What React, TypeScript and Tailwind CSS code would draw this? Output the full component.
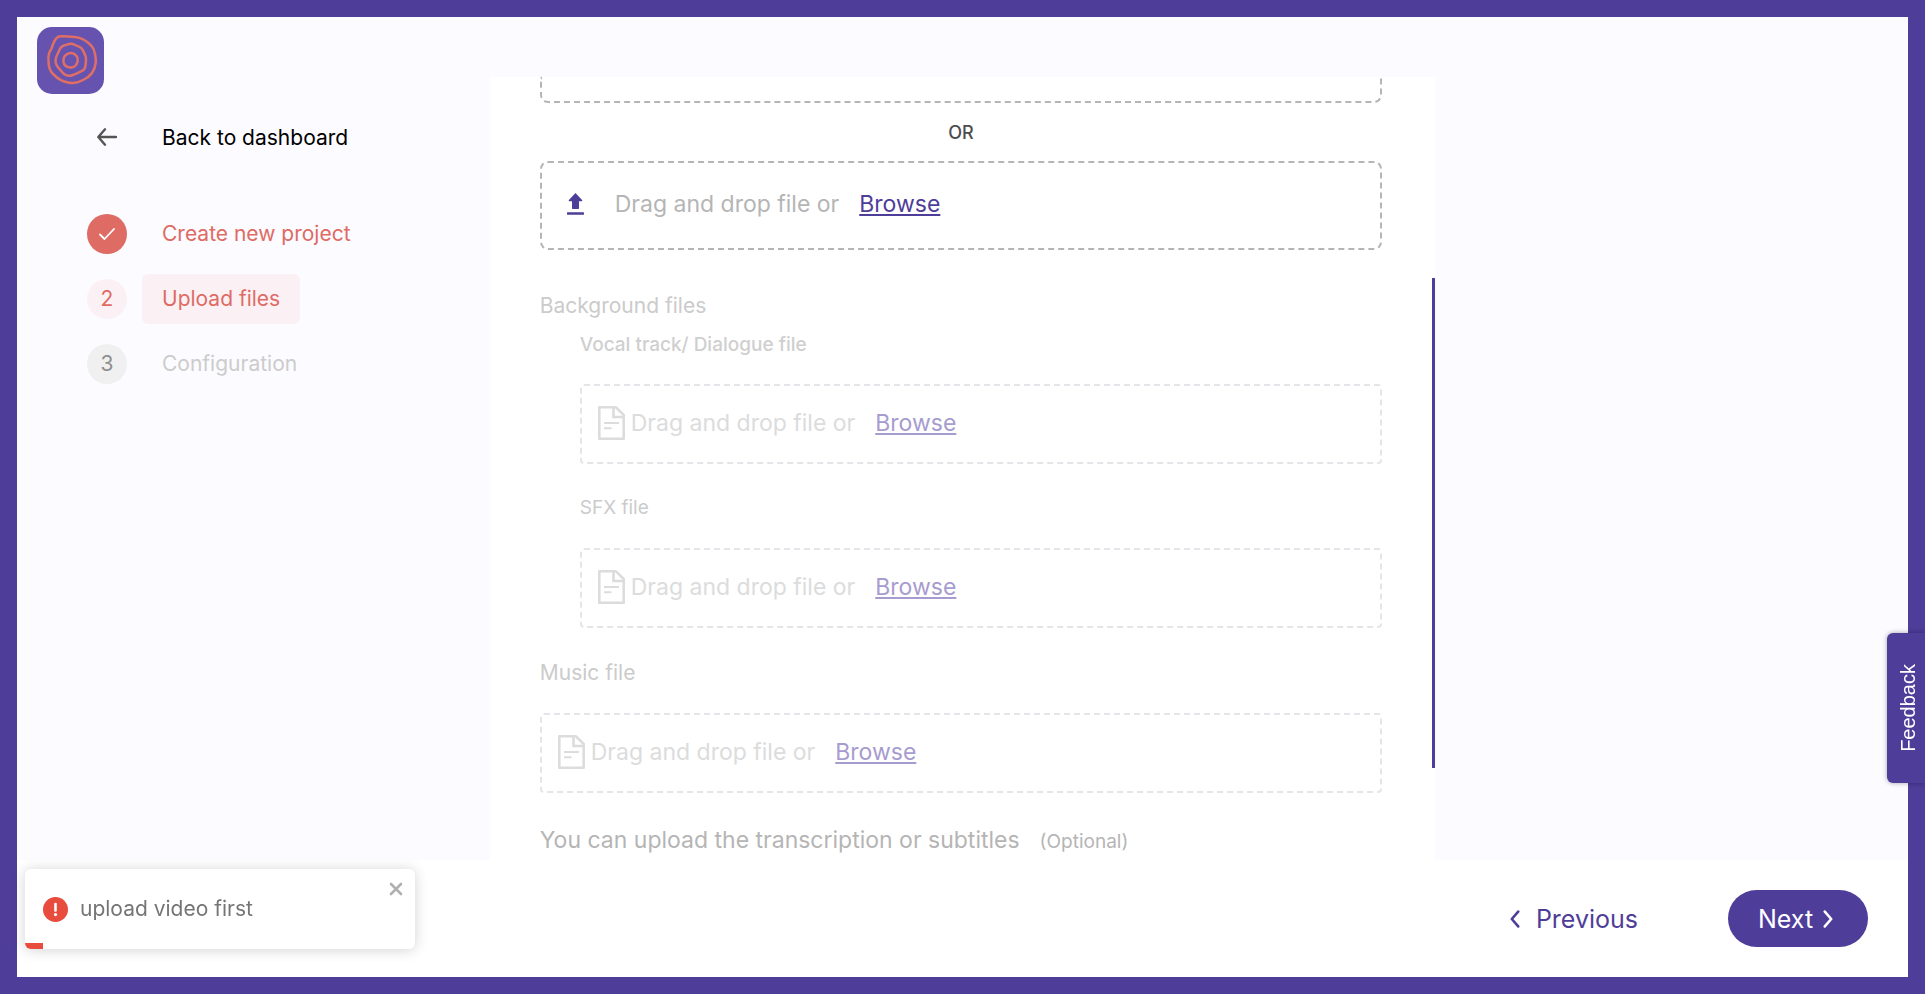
import React from "react";

function Logo() {
  return (
    <svg viewBox="0 0 67 67" className="size-[67px]" role="img" aria-label="Logo">
      <rect width="67" height="67" rx="15" fill="#6653b0" />
      <g fill="none" stroke="#df6e65" strokeWidth="2.5" strokeLinejoin="round">
        <path d="M22 9.500C26 9 32 9.500 38 10C47 11 56 18 57.500 25C58.500 29 59.500 33 58.500 37C57.500 45 53 49.500 47 52.500C41 56 37 57 31 55.500C25 54.500 20 51 16.500 47.500C12.500 44 11.500 40 11.500 34C11 29 12 25 14.500 21.500C16 17 17.500 11 22 9.500Z" />
        <path d="M27 18.500C31 17.500 34 15.500 37 17.500C40 19.500 44 19.500 45.500 22.500C47 26 49.500 29 49 33C48.500 37 49.500 40 46.500 43C43 45.500 39 46.500 36 48C32 49.500 28 48.500 25.500 45.500C23 42 18.500 39.500 18.500 34C18.500 30 20 28 21.500 25C22.500 22 24 19.500 27 18.500Z" />
        <path d="M29.500 27.500C32 25.500 36 25.500 38 27.500C40.500 29.500 41.500 33 40 36C39 39 36 41 33 40.500C29.500 40 27 38.500 26.500 35C26.500 31.500 26.500 29.500 29.500 27.500Z" />
      </g>
    </svg>
  );
}

function UploadIcon() {
  return (
    <svg viewBox="0 0 17 22" className="h-[22px] w-[17px] shrink-0" fill="#4f3d9a" aria-hidden="true">
      <path d="M8.500 0 15.300 7.300Q15.500 8.300 14.500 8.300H12V15.300Q12 16 11.300 16H5.700Q5 16 5 15.300V8.300H2.500Q1.500 8.300 1.700 7.300Z" />
      <rect y="19.200" width="17" height="2.600" rx="0.600" />
    </svg>
  );
}

function FileIcon() {
  return (
    <svg viewBox="0 0 27 34" className="h-[34px] w-[27px] shrink-0" fill="none" stroke="#dcdcdc" strokeWidth="2.600" aria-hidden="true">
      <path d="M1.300 1.300H18L25.700 9V32.700H1.300Z" strokeLinejoin="round" />
      <path d="M15.500 1.300V11H25.700" />
      <path d="M6 17H21M6 22.200H13.500" strokeWidth="2" />
    </svg>
  );
}

function Chevron({ left = false }: { left?: boolean }) {
  return (
    <svg viewBox="0 0 10 18" className="h-[18px] w-[10px]" fill="none" stroke="currentColor" strokeWidth="2.600" strokeLinecap="round" strokeLinejoin="round" aria-hidden="true">
      <path d={left ? "M8.200 1.600 1.800 9 8.200 16.400" : "M1.800 1.600 8.200 9 1.800 16.400"} />
    </svg>
  );
}

function DisabledDrop({ label }: { label: string }) {
  return (
    <div className="flex h-20 items-center rounded border-2 border-dashed border-[#e5e4e9] pb-0.5 pl-4 text-[23px] leading-8 text-[#dcdcdc]">
      <FileIcon />
      <span className="pl-1.5">Drag and drop file or</span>
      <button type="button" aria-label={`Browse ${label}`} className="ml-5 text-[#a79ccf] underline decoration-2 underline-offset-2">
        Browse
      </button>
    </div>
  );
}

const steps = [
  { n: 1, label: "Create new project", circle: "bg-[#de6b64] text-white", text: "text-[#de6b64]" },
  { n: 2, label: "Upload files", circle: "bg-[#fbf1f4] text-[#de6b64]", text: "bg-[#fbf1f4] text-[#de6b64]" },
  { n: 3, label: "Configuration", circle: "bg-[#f0f0f0] text-[#8f8f8f]", text: "text-[#cccccc]" },
];

function Sidebar() {
  return (
    <aside className="w-1/4 shrink-0 pt-11 pl-[70px] text-[21px] leading-[30px]">
      <a href="#dashboard" className="flex items-center text-black">
        <span className="flex w-10 justify-center">
          <svg viewBox="0 0 20 18" className="h-[18px] w-5" fill="none" stroke="#555" strokeWidth="2.400" strokeLinecap="round" strokeLinejoin="round" aria-hidden="true">
            <path d="M19 9H1.500M8 1.300 1.300 9 8 16.700" />
          </svg>
        </span>
        <span className="pt-0.5 pl-[35px]">Back to dashboard</span>
      </a>
      <ol className="mt-14 flex flex-col gap-[15px]">
        {steps.map((s) => (
          <li key={s.n} className="flex h-[50px] items-center gap-[15px]">
            <span className={`flex size-10 items-center justify-center rounded-full ${s.circle}`}>
              {s.n === 1 ? (
                <svg viewBox="0 0 16 12" className="h-3 w-4" fill="none" stroke="currentColor" strokeWidth="1.800" strokeLinecap="round" strokeLinejoin="round" aria-hidden="true">
                  <path d="M1 6.500 5.500 11 15 1" />
                </svg>
              ) : (
                s.n
              )}
            </span>
            <span className={`rounded-md px-5 py-2.5 ${s.text}`}>{s.label}</span>
          </li>
        ))}
      </ol>
    </aside>
  );
}

function UploadPanel() {
  return (
    <main className="relative w-1/2 overflow-hidden bg-white pr-[53px] pl-[50px]">
      <div className="h-[26px] rounded-b-lg border-2 border-t-0 border-dashed border-[#b5b5b5]" />
      <p className="pt-[17px] pb-[15px] text-center text-[18px] leading-[26px] font-medium text-[#4c4c4c]">OR</p>
      <div className="flex h-[89px] items-center rounded-lg border-2 border-dashed border-[#b5b5b5] pb-1 pl-[25px] text-[23px] leading-8 text-[#b5b5b5]">
        <UploadIcon />
        <span className="pl-[31px]">Drag and drop file or</span>
        <button type="button" className="ml-5 text-[#4f3d9a] underline decoration-2 underline-offset-2">
          Browse
        </button>
      </div>

      <h2 className="mt-10 text-[21px] leading-8 text-[#cbcbcb]">Background files</h2>
      <div className="pl-10">
        <h3 className="mt-2 mb-6 text-[19px] leading-[30px] font-medium text-[#cfcfcf]">Vocal track/ Dialogue file</h3>
        <DisabledDrop label="vocal track" />
        <h3 className="mt-[29px] mb-[25px] text-[19px] leading-[30px] text-[#cbcbcb]">SFX file</h3>
        <DisabledDrop label="SFX file" />
      </div>
      <h2 className="mt-[29px] mb-6 text-[21px] leading-8 text-[#cbcbcb]">Music file</h2>
      <DisabledDrop label="music file" />
      <p className="mt-[31px] text-[23px] leading-8 text-[#b5b5b5]">
        You can upload the transcription or subtitles
        <span className="pl-5 text-[19px]">(Optional)</span>
      </p>
      <div className="absolute top-[201px] right-0 h-[490px] w-[3px] bg-[#4f3d9a]" />
    </main>
  );
}

function Toast() {
  return (
    <div role="alert" className="fixed bottom-[45px] left-[25px] flex h-20 w-[390px] items-center overflow-hidden rounded-md bg-white pl-[18px] text-[21px] leading-[30px] text-[#757575] shadow-[0_1px_14px_rgba(0,0,0,0.18)]">
      <svg viewBox="0 0 25 25" className="size-[25px]" aria-hidden="true">
        <circle cx="12.500" cy="12.500" r="12.500" fill="#e74c3c" />
        <path d="M12.500 7V13.500" stroke="#fff" strokeWidth="2.600" strokeLinecap="round" />
        <circle cx="12.500" cy="17.600" r="1.600" fill="#fff" />
      </svg>
      <span className="pl-3">upload video first</span>
      <button type="button" aria-label="Close" className="absolute top-[13px] right-3">
        <svg viewBox="0 0 14 14" className="size-3.5" fill="none" stroke="#b0b0b0" strokeWidth="2.600" strokeLinecap="round">
          <path d="M2 2 12 12M12 2 2 12" />
        </svg>
      </button>
      <span className="absolute bottom-0 left-0 h-1.5 w-[18px] bg-[#e74c3c]" />
    </div>
  );
}

export default function App() {
  return (
    <div className="flex h-screen flex-col border-[17px] border-[#4f3d9a] bg-[#fcfbff] font-['Inter',sans-serif]">
      <header className="h-[60px] shrink-0 pt-2.5 pl-5">
        <Logo />
      </header>
      <div className="flex min-h-0 flex-1">
        <Sidebar />
        <UploadPanel />
      </div>
      <footer className="flex h-[117px] shrink-0 items-center justify-end gap-[90px] bg-white pr-10 text-[25px] leading-9">
        <button type="button" className="flex items-center gap-4 text-[#4f3d9a]">
          <Chevron left />
          Previous
        </button>
        <button type="button" className="flex h-[57px] w-[140px] items-center gap-2.5 rounded-full bg-[#4f3d9a] pl-[30px] text-white">
          Next
          <Chevron />
        </button>
      </footer>
      <Toast />
      <button type="button" className="fixed right-0 bottom-[211px] flex h-[150px] w-[38px] items-center justify-center rounded-l-md bg-[#4f3d9a] pl-1 font-['Liberation_Sans',sans-serif] text-[20px] text-white shadow-[0_0_5px_rgba(0,0,0,0.35)]">
        <span className="rotate-180 [writing-mode:vertical-rl]">Feedback</span>
      </button>
    </div>
  );
}
